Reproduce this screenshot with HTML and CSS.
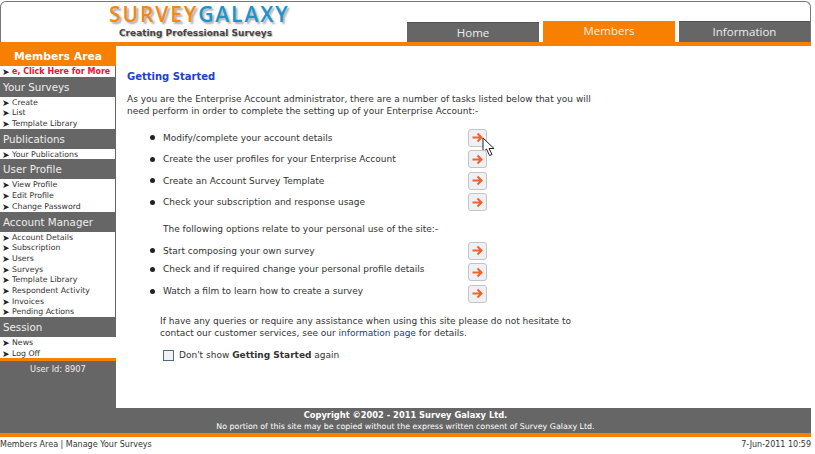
FILE: index.html
```html
<!DOCTYPE html>
<html lang="en">
<head>
  <meta charset="UTF-8">
  <title>Survey Galaxy - Members Area</title>
  <link rel="stylesheet" href="styles.css">
</head>
<body>
  <header class="header">
    <div class="logo">
      <div class="logo-name"><span class="logo-survey">SURVEY</span><span class="logo-galaxy">GALAXY</span></div>
      <div class="logo-tag">Creating Professional Surveys</div>
    </div>
    <nav class="tabs">
      <a class="tab tab-home">Home</a>
      <a class="tab tab-active">Members</a>
      <a class="tab tab-info">Information</a>
    </nav>
  </header>
  <div class="page">
    <aside class="sidebar">
      <h2 class="members-title">Members Area</h2>
      <ul class="menu">
        <li class="menu-alert">e, Click Here for More</li>
      </ul>
      <h3 class="menu-title">Your Surveys</h3>
      <ul class="menu">
        <li>Create</li>
        <li>List</li>
        <li>Template Library</li>
      </ul>
      <h3 class="menu-title">Publications</h3>
      <ul class="menu">
        <li>Your Publications</li>
      </ul>
      <h3 class="menu-title">User Profile</h3>
      <ul class="menu">
        <li>View Profile</li>
        <li>Edit Profile</li>
        <li>Change Password</li>
      </ul>
      <h3 class="menu-title">Account Manager</h3>
      <ul class="menu">
        <li>Account Details</li>
        <li>Subscription</li>
        <li>Users</li>
        <li>Surveys</li>
        <li>Template Library</li>
        <li>Respondent Activity</li>
        <li>Invoices</li>
        <li>Pending Actions</li>
      </ul>
      <h3 class="menu-title">Session</h3>
      <ul class="menu menu-last">
        <li>News</li>
        <li>Log Off</li>
      </ul>
      <div class="user-id">User Id: 8907</div>
    </aside>
    <main class="content">
      <h1 class="content-title">Getting Started</h1>
      <p class="intro">As you are the Enterprise Account administrator, there are a number of tasks listed below that you will<br>need perform in order to complete the setting up of your Enterprise Account:-</p>
      <ul class="tasks">
        <li class="task"><span class="task-text">Modify/complete your account details</span><button class="go"><svg width="11" height="11" viewBox="0 0 11 11"><path d="M0.5 5.5H9.5M5.5 1.5L9.5 5.5L5.5 9.5" fill="none" stroke="#f0622a" stroke-width="2"/></svg></button>
          <svg class="cursor" width="14" height="20" viewBox="0 0 14 20"><path d="M1 1V15L4.5 12L7.5 18.5L10 17.5L7 11.5H12Z" fill="#fff" stroke="#222" stroke-width="1"/></svg>
        </li>
        <li class="task"><span class="task-text">Create the user profiles for your Enterprise Account</span><button class="go"><svg width="11" height="11" viewBox="0 0 11 11"><path d="M0.5 5.5H9.5M5.5 1.5L9.5 5.5L5.5 9.5" fill="none" stroke="#f0622a" stroke-width="2"/></svg></button></li>
        <li class="task"><span class="task-text">Create an Account Survey Template</span><button class="go"><svg width="11" height="11" viewBox="0 0 11 11"><path d="M0.5 5.5H9.5M5.5 1.5L9.5 5.5L5.5 9.5" fill="none" stroke="#f0622a" stroke-width="2"/></svg></button></li>
        <li class="task"><span class="task-text">Check your subscription and response usage</span><button class="go"><svg width="11" height="11" viewBox="0 0 11 11"><path d="M0.5 5.5H9.5M5.5 1.5L9.5 5.5L5.5 9.5" fill="none" stroke="#f0622a" stroke-width="2"/></svg></button></li>
      </ul>
      <p class="following">The following options relate to your personal use of the site:-</p>
      <ul class="tasks">
        <li class="task"><span class="task-text">Start composing your own survey</span><button class="go"><svg width="11" height="11" viewBox="0 0 11 11"><path d="M0.5 5.5H9.5M5.5 1.5L9.5 5.5L5.5 9.5" fill="none" stroke="#f0622a" stroke-width="2"/></svg></button></li>
        <li class="task task-high"><span class="task-text">Check and if required change your personal profile details</span><button class="go"><svg width="11" height="11" viewBox="0 0 11 11"><path d="M0.5 5.5H9.5M5.5 1.5L9.5 5.5L5.5 9.5" fill="none" stroke="#f0622a" stroke-width="2"/></svg></button></li>
        <li class="task task-raised"><span class="task-text">Watch a film to learn how to create a survey</span><button class="go"><svg width="11" height="11" viewBox="0 0 11 11"><path d="M0.5 5.5H9.5M5.5 1.5L9.5 5.5L5.5 9.5" fill="none" stroke="#f0622a" stroke-width="2"/></svg></button></li>
      </ul>
      <p class="help">If have any queries or require any assistance when using this site please do not hesitate to<br>contact our customer services, see our <a class="help-link">information page</a> for details.</p>
      <label class="dont-show"><span class="check"></span><span>Don't show <b>Getting Started</b> again</span></label>
    </main>
  </div>
  <footer class="footer">
    <div class="copyright">Copyright ©2002 - 2011 Survey Galaxy Ltd.</div>
    <div class="notice">No portion of this site may be copied without the express written consent of Survey Galaxy Ltd.</div>
  </footer>
  <div class="status">
    <span>Members Area | Manage Your Surveys</span>
    <span>7-Jun-2011 10:59</span>
  </div>
</body>
</html>
```
FILE: styles.css
```css
/* Base styles */
html, body {
  margin: 0;
  padding: 0;
  height: 100%;
  overflow: hidden;
}
body {
  width: 811px;
  font-family: "DejaVu Sans", Verdana, sans-serif;
  font-size: 9px;
  color: #333;
  background-color: #fff;
}
ul, h1, h2, h3, p {
  margin: 0;
  padding: 0;
  list-style: none;
}

/* Header */
.header {
  box-sizing: border-box;
  height: 41px;
  margin-top: 1px;
  display: flex;
  justify-content: space-between;
  align-items: flex-end;
  border: 1px solid #777;
  border-bottom: none;
  border-radius: 6px 6px 0 0;
}
.logo {
  margin-left: 108px;
  align-self: flex-start;
}
.logo-name {
  font-family: "Open Sans", sans-serif;
  font-size: 21px;
  line-height: 25px;
  font-weight: 600;
  letter-spacing: 1.9px;
  text-shadow: 2px 2px 2px #aaa;
}
.logo-survey {
  color: #f0881a;
}
.logo-galaxy {
  color: #1c93cf;
}
.logo-tag {
  margin-left: 10px;
  font-size: 9px;
  font-weight: bold;
  line-height: 12px;
  color: #444;
  text-shadow: 1px 1px 1px #bbb;
}
.tabs {
  display: flex;
  align-items: flex-end;
  gap: 4px;
}
.tab {
  width: 132px;
  text-align: center;
  font-family: "Open Sans", sans-serif;
  font-size: 11.5px;
  color: #eee;
  background-color: #666;
  border-top: 1px solid #555;
}
.tab-home {
  height: 19px;
  line-height: 19px;
}
.tab-active {
  height: 21px;
  line-height: 20px;
  background-color: #f78000;
  border-top: none;
}
.tab-info {
  width: 131px;
  height: 20px;
  line-height: 19px;
}

/* Page body */
.page {
  display: flex;
  height: 362px;
  background-color: #666;
  border-top: 4px solid #f78000;
}
.sidebar {
  width: 116px;
  flex: none;
}
.members-title {
  height: 20px;
  line-height: 22px;
  text-align: center;
  font-size: 10.8px;
  font-weight: bold;
  color: #fff;
  background-color: #f78000;
}
.menu-title {
  height: 20px;
  line-height: 21px;
  padding-left: 3px;
  font-size: 10.3px;
  font-weight: normal;
  color: #eee;
}
.menu {
  margin-right: 1px;
  background-color: #fff;
}
.menu li {
  height: 10.7px;
  line-height: 12px;
  padding-left: 12px;
  position: relative;
  font-size: 7.8px;
  white-space: nowrap;
  overflow: hidden;
}
.menu li::before {
  content: "➤";
  position: absolute;
  left: 2px;
  top: 0;
  font-size: 9px;
  color: #222;
}
.menu .menu-alert {
  font-size: 8px;
  font-weight: bold;
  color: #f01030;
}
.menu-last {
  border-bottom: 3px solid #f78000;
  margin-right: 0;
}
.user-id {
  margin-top: 3px;
  text-align: center;
  font-size: 8.3px;
  color: #eee;
}

/* Main content */
.content {
  flex: 1;
  box-sizing: border-box;
  padding: 24px 0 0 11px;
  background-color: #fff;
}
.content-title {
  font-size: 10px;
  line-height: 14px;
  font-weight: bold;
  color: #2040d0;
}
.intro {
  margin-top: 9px;
  line-height: 12px;
}
.tasks {
  padding-left: 25px;
}
.intro + .tasks {
  margin-top: 10px;
}
.task {
  display: flex;
  position: relative;
  align-items: center;
  height: 21.5px;
}
.task::before {
  content: "";
  position: absolute;
  left: -2px;
  top: 8px;
  width: 5px;
  height: 5px;
  border-radius: 50%;
  background-color: #222;
}
.task-text {
  margin-left: 11px;
  width: 305px;
  white-space: nowrap;
}
.task-high .task-text {
  margin-top: -6px;
}
.task-high::before {
  top: 5px;
}
.task-raised .task-text {
  margin-top: -5px;
}
.task-raised::before {
  top: 6px;
}
.go {
  box-sizing: border-box;
  width: 19px;
  height: 18px;
  padding: 0;
  display: flex;
  align-items: center;
  justify-content: center;
  background-color: #eef0f4;
  border: 1px solid #c4c4c4;
  border-radius: 3px;
}
.cursor {
  position: absolute;
  left: 330px;
  top: 10px;
}
.following {
  margin: 10px 0 5px 36px;
  line-height: 12px;
}
.help {
  margin: 10px 0 0 33px;
  line-height: 12px;
}
.help-link {
  color: #223a8c;
}
.dont-show {
  display: flex;
  align-items: center;
  gap: 5px;
  margin: 11px 0 0 36px;
}
.check {
  box-sizing: border-box;
  width: 11px;
  height: 11px;
  border: 1px solid #556a80;
  background-color: #f2f3f5;
}

/* Footer */
.footer {
  height: 25px;
  text-align: center;
  line-height: 11px;
  padding-top: 2px;
  box-sizing: border-box;
  color: #fff;
  background-color: #666;
}
.copyright {
  font-weight: bold;
  font-size: 8.3px;
}
.notice {
  font-size: 7.9px;
}
.status {
  display: flex;
  justify-content: space-between;
  height: 17px;
  line-height: 15px;
  font-size: 8px;
  border-top: 4px solid #f78000;
  color: #333;
}
```
